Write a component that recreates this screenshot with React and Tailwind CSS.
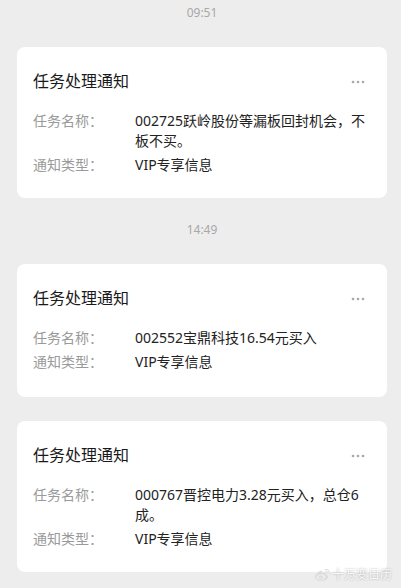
import React from "react";
import { FaWeibo } from "react-icons/fa";

const font = { fontFamily: '"Noto Sans", "Noto Sans CJK SC", sans-serif' };

function Dots() {
  return (
    <svg width="14" height="4" viewBox="0 0 14 4" className="mt-[1px]">
      <circle cx="2" cy="2" r="1.3" fill="#a8a8a8" />
      <circle cx="7" cy="2" r="1.3" fill="#a8a8a8" />
      <circle cx="12" cy="2" r="1.3" fill="#a8a8a8" />
    </svg>
  );
}

function Card({ name, className = "" }) {
  return (
    <div className={`bg-white rounded-[8px] pl-[16px] pr-[18px] pt-[24px] ${className}`}>
      <div className="flex items-center justify-between h-[20px]">
        <div className="text-[16px] leading-[20px] text-[#1a1a1a]">任务处理通知</div>
        <div className="pr-[4px]">
          <Dots />
        </div>
      </div>
      <div className="mt-[20px] flex flex-col gap-[4px] text-[14px] leading-[20px]">
        <div className="flex">
          <div className="w-[102px] shrink-0 text-[#9a9a9a]">任务名称：</div>
          <div className="flex-1 text-[#222222]">{name}</div>
        </div>
        <div className="flex">
          <div className="w-[102px] shrink-0 text-[#9a9a9a]">通知类型：</div>
          <div className="flex-1 text-[#222222]">VIP专享信息</div>
        </div>
      </div>
    </div>
  );
}

function Time({ children, className = "" }) {
  return (
    <div className={`text-center text-[12px] leading-[18px] text-[#a8a8a8] ${className}`}>
      {children}
    </div>
  );
}

export default function App() {
  return (
    <div
      className="relative w-[401px] h-[588px] bg-[#ededed] overflow-hidden pl-[17px] pr-[14px]"
      style={font}
    >
      <Time className="pt-[4px]">09:51</Time>
      <Card className="mt-[25px] pb-[23px]" name="002725跃岭股份等漏板回封机会，不板不买。" />
      <Time className="mt-[23px]">14:49</Time>
      <Card className="mt-[25px] pb-[25px]" name="002552宝鼎科技16.54元买入" />
      <Card className="mt-[24px] pb-[23px]" name="000767晋控电力3.28元买入，总仓6成。" />
      <div className="absolute right-[9px] bottom-[5px] flex items-center gap-[2px] text-white/90 text-[12px] leading-[16px] [text-shadow:0_0_2px_rgba(0,0,0,0.35)]">
        <FaWeibo className="w-[15px] h-[15px] text-[#dcdcdc]" />
        <span>十万变日历</span>
      </div>
    </div>
  );
}
